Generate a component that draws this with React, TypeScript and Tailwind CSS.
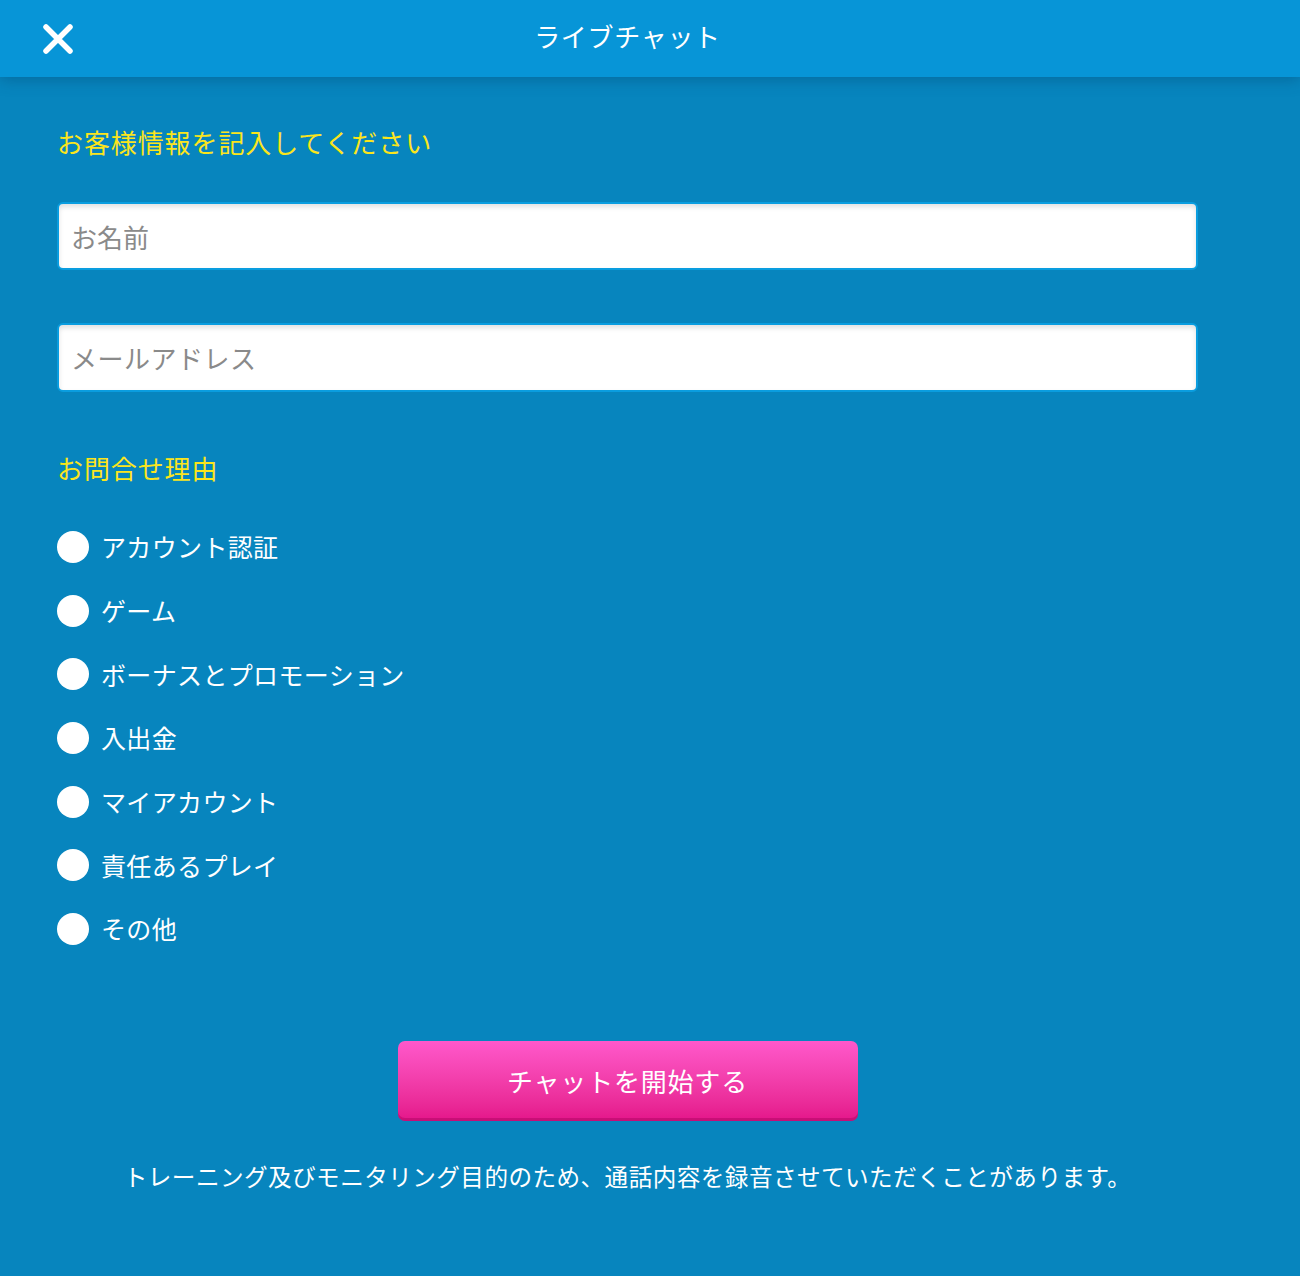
import React, { useState } from 'react';

const reasons = [
  'アカウント認証',
  'ゲーム',
  'ボーナスとプロモーション',
  '入出金',
  'マイアカウント',
  '責任あるプレイ',
  'その他',
];

const font = { fontFamily: '"Noto Sans CJK JP", "Noto Sans", sans-serif' };

const App: React.FC = () => {
  const [name, setName] = useState('');
  const [email, setEmail] = useState('');
  const [reason, setReason] = useState<string | null>(null);

  return (
    <div className="min-h-[1276px] w-[1300px] bg-[#0785be] text-white" style={font}>
      {/* Header */}
      <div className="relative z-10 flex h-[77px] w-full items-center bg-[#0795d7] shadow-[0_3px_14px_rgba(0,60,100,0.35)]">
        <div className="flex w-[1255px] items-center">
          <button className="ml-[42px] flex h-[32px] w-[32px] items-center justify-center">
            <svg width="32" height="30" viewBox="0 0 32 30">
              <path d="M4 3 L28 27 M28 3 L4 27" stroke="white" strokeWidth="5.5" strokeLinecap="round" />
            </svg>
          </button>
          <div className="flex-1 pr-[74px] pb-[6px] text-center text-[26px] leading-none tracking-[0.7px]">ライブチャット</div>
        </div>
      </div>

      {/* Form */}
      <div className="w-[1255px] px-[57px] pt-[45px]">
        <h2 className="text-[26px] leading-[39px] text-[#fbe51c] tracking-[0.9px]">お客様情報を記入してください</h2>

        <input
          value={name}
          onChange={(e) => setName(e.target.value)}
          placeholder="お名前"
          className="mt-[41px] block h-[68px] w-full rounded-[6px] border-2 border-[#0a9ddf] bg-white px-[12px] text-[26px] text-gray-700 outline-none shadow-[inset_0_3px_5px_rgba(0,0,0,0.12)] placeholder:text-[#8a8a8a]"
          style={font}
        />
        <input
          value={email}
          onChange={(e) => setEmail(e.target.value)}
          placeholder="メールアドレス"
          className="mt-[53px] block h-[69px] w-full rounded-[6px] border-2 border-[#0a9ddf] bg-white px-[12px] text-[26px] tracking-[0.5px] text-gray-700 outline-none shadow-[inset_0_3px_5px_rgba(0,0,0,0.12)] placeholder:text-[#8a8a8a]"
          style={font}
        />

        <h2 className="mt-[56px] text-[26px] leading-[39px] text-[#fbe51c] tracking-[0.9px]">お問合せ理由</h2>

        <div className="mt-[28px] flex flex-col">
          {reasons.map((r) => (
            <label key={r} className="flex h-[63.7px] cursor-pointer items-center">
              <span className="flex h-[32px] w-[32px] items-center justify-center rounded-full bg-white">
                {reason === r && <span className="h-[14px] w-[14px] rounded-full bg-[#0785be]" />}
              </span>
              <input type="radio" name="reason" className="hidden" checked={reason === r} onChange={() => setReason(r)} />
              <span className="ml-[12px] text-[25px] leading-none tracking-[0.35px]">{r}</span>
            </label>
          ))}
        </div>

        <div className="mt-[80px] flex justify-center">
          <button
            className="h-[80px] w-[460px] rounded-[7px] bg-gradient-to-b from-[#ff58cb] to-[#e4148a] text-[26px] tracking-[0.8px] text-white shadow-[inset_0_-3px_0_rgba(150,0,80,0.35)]"
            style={font}
          >
            チャットを開始する
          </button>
        </div>

        <p className="mt-[38px] text-center text-[23.6px] leading-[34px] tracking-[0.45px]">
          トレーニング及びモニタリング目的のため、通話内容を録音させていただくことがあります。
        </p>
      </div>
    </div>
  );
};

export default App;
